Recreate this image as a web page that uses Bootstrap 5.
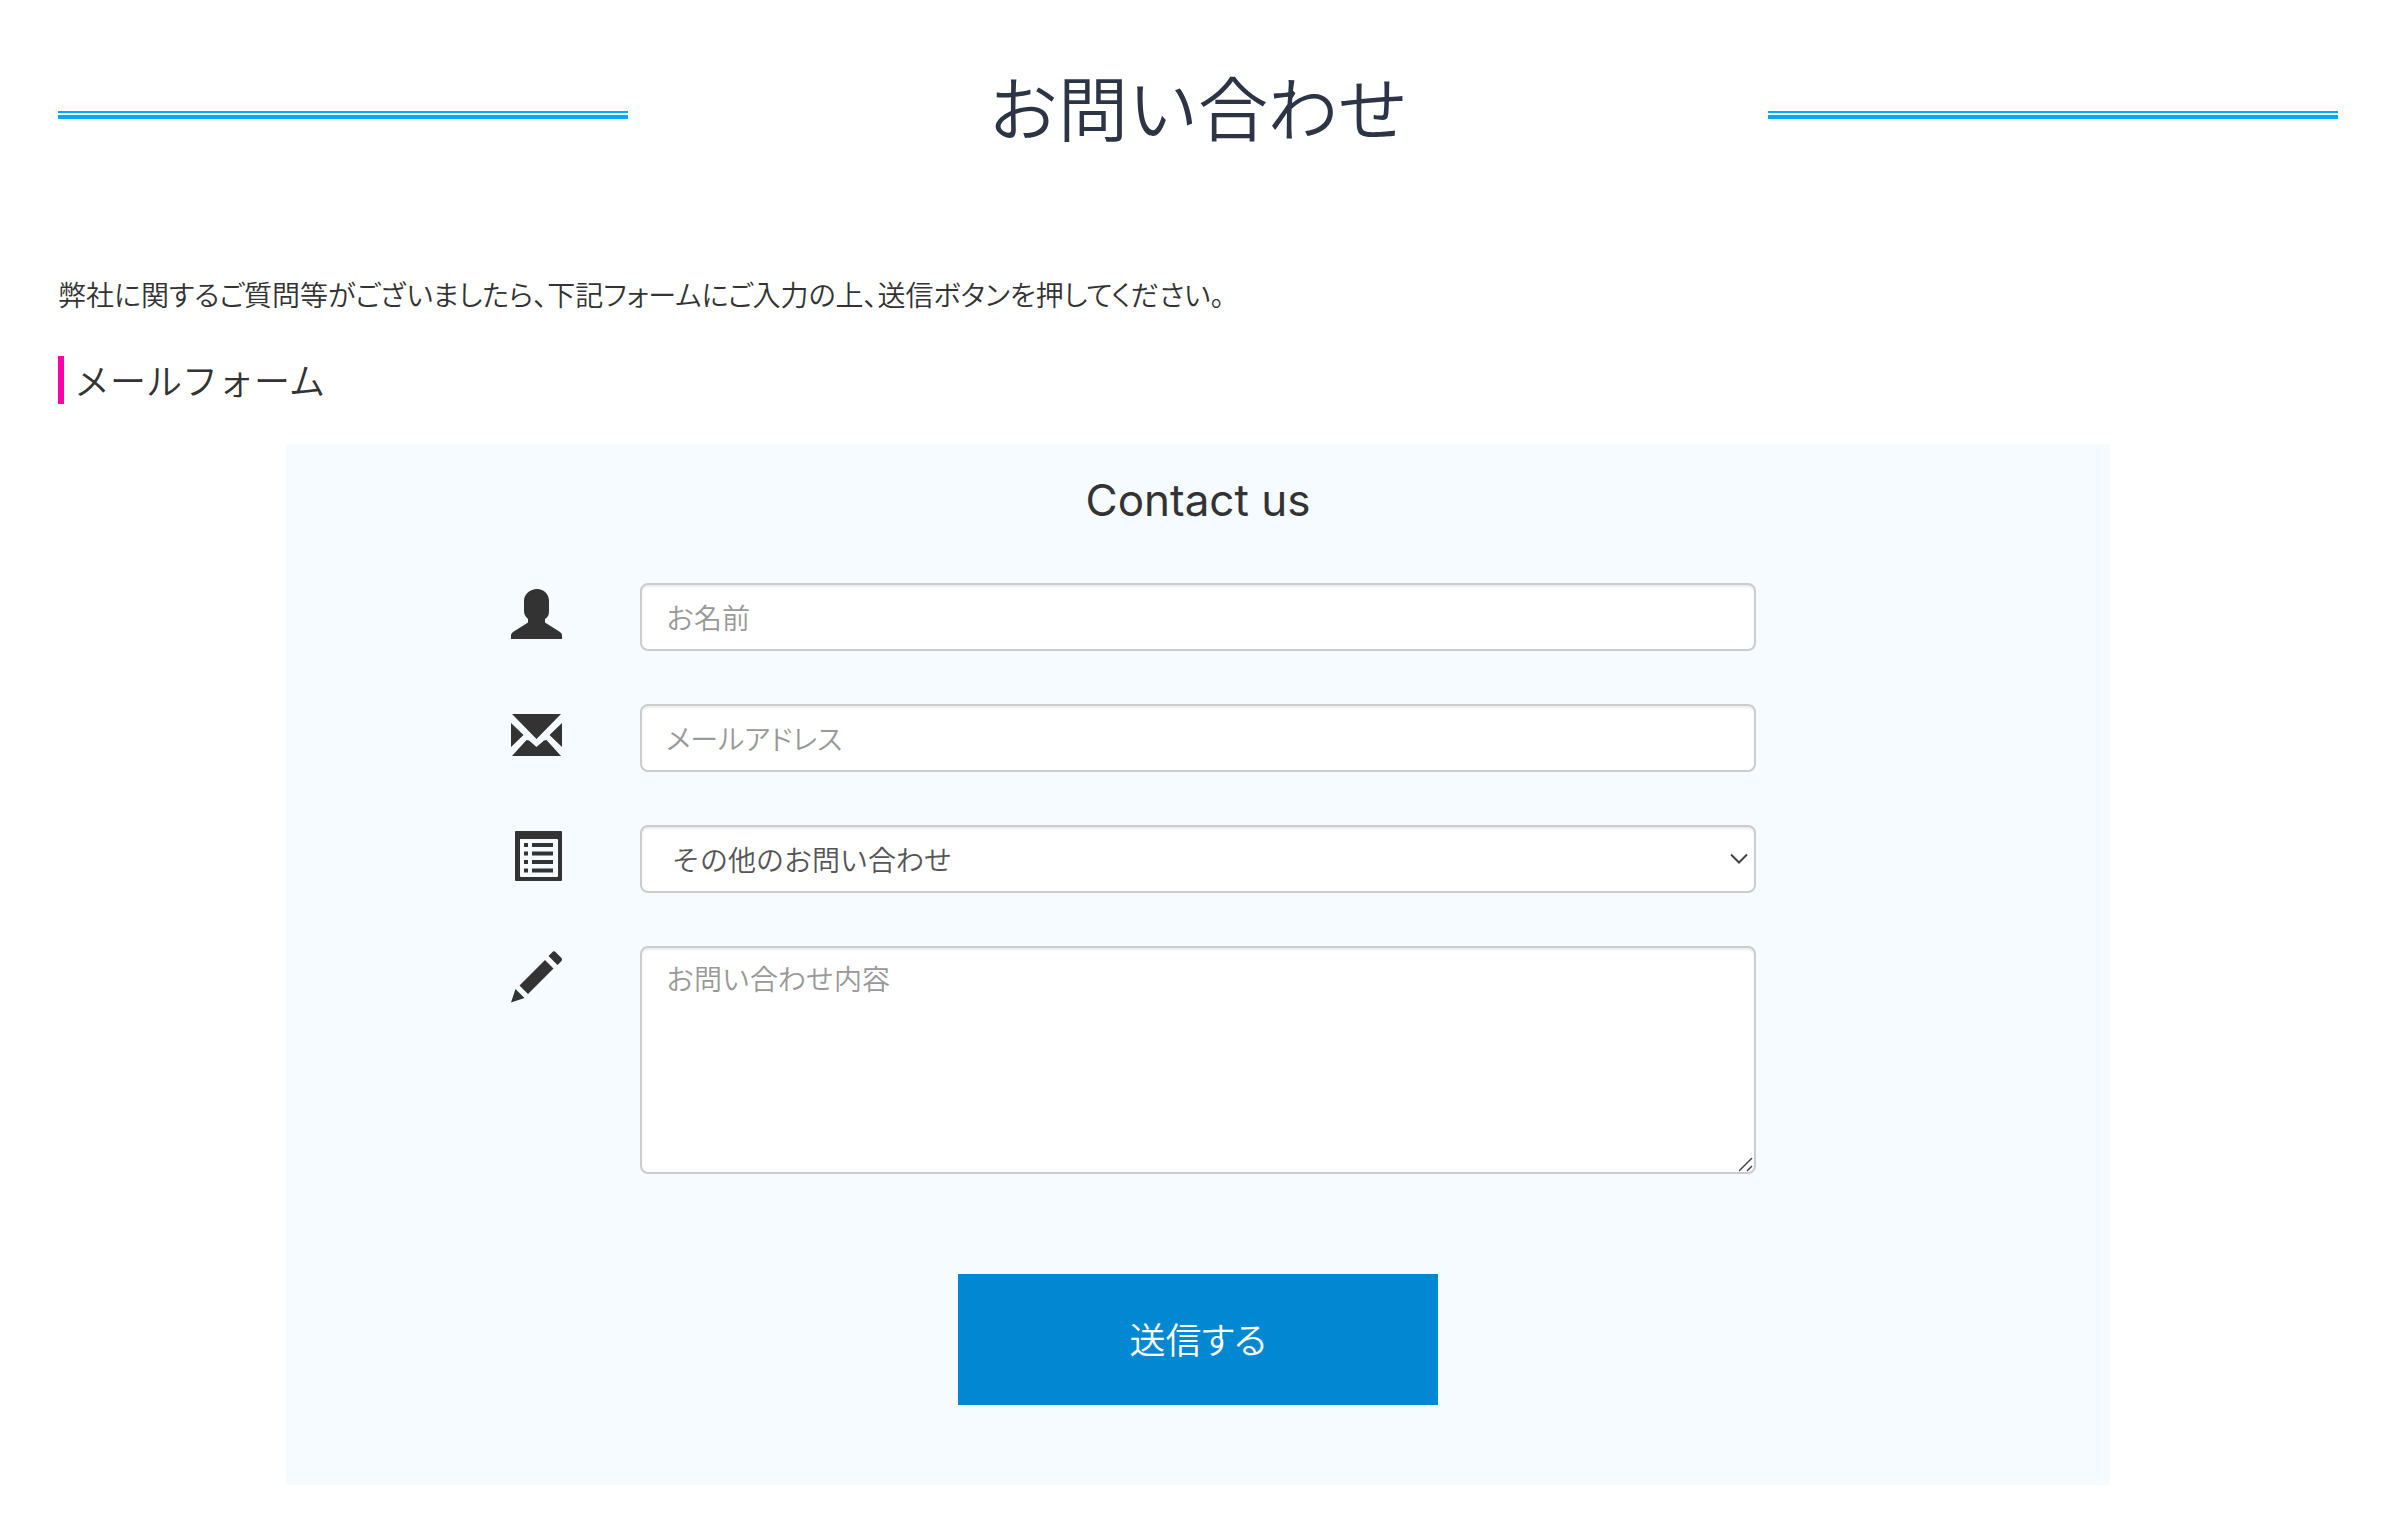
<!DOCTYPE html>
<html lang="ja">
<head>
<meta charset="utf-8">
<meta name="viewport" content="width=device-width, initial-scale=1">
<title>お問い合わせ</title>
<link href="https://cdn.jsdelivr.net/npm/bootstrap@5.3.0/dist/css/bootstrap.min.css" rel="stylesheet">
<style>
  body { font-family: "Noto Sans CJK JP", sans-serif; font-weight: 350; font-size: 28px; line-height: 40px; color: #333; background: #fff; }
  .page { padding: 56px 56px 28px 58px; }
  .rule { height: 8px; margin-top: 18px; border-top: 2px solid #03a9ff; border-bottom: 4px solid #03a9ff; }
  .page-title { font-size: 70px; line-height: 100px; font-weight: 350; color: #2d3446; }
  .intro { margin-top: 118px; font-feature-settings: "palt"; }
  .section-title { margin-top: 42px; border-left: 6px solid #f0a; padding: 0 0 2px 10px; font-size: 36px; line-height: 46px; font-weight: 350; }
  .contact-panel { width: 80%; margin-top: 40px; padding: 28px 60px 80px; background: #f6fbff; }
  .contact-title { font-family: Inter, sans-serif; font-size: 44px; line-height: 56px; font-weight: 400; margin-bottom: 55px; }
  .form-line { --bs-gutter-x: 60px; margin-bottom: 53px; }
  .icon-label { padding: 5px 17px 0 0; }
  .icon-label svg { width: 52px; height: 52px; display: block; fill: #333; }
  .field { height: 68px; padding: 10px 24px; border: 2px solid #ccc; border-radius: 8px; font-size: 28px; line-height: 40px; font-weight: 350; color: #555; background-color: #fff; box-shadow: inset 0 2px 2px rgba(0,0,0,.075); }
  .field::placeholder { color: #999; }
  .field-mail { font-feature-settings: "palt"; }
  .field-select { padding-left: 30px; background-image: url("data:image/svg+xml,%3Csvg xmlns='http://www.w3.org/2000/svg' viewBox='0 0 18 12'%3E%3Cpath d='M1 1.500L9 9.500L17 1.500' fill='none' stroke='%23444' stroke-width='2'/%3E%3C/svg%3E"); background-size: 18px 12px; background-position: right 6px center; }
  .field-area { height: 228px; }
  .field-area::-webkit-resizer { background: url("data:image/svg+xml,%3Csvg xmlns='http://www.w3.org/2000/svg' viewBox='0 0 15 15'%3E%3Cpath d='M0 14L13 1M8 14L13 9' stroke='%23444' stroke-width='1.500'/%3E%3C/svg%3E") no-repeat center / 15px 15px; }
  .send-btn { width: 480px; height: 131px; margin-top: 47px; padding: 4px 0 8px; background: #0288d3; color: #fff; border: 0; border-radius: 0; font-size: 36px; line-height: 48px; font-weight: 350; font-feature-settings: "palt"; }
</style>
<script src="https://cdn.jsdelivr.net/npm/bootstrap@5.3.0/dist/js/bootstrap.bundle.min.js"></script>
</head>
<body>
<main class="page">
  <header class="row gx-0 align-items-center">
    <div class="col-3"><div class="rule"></div></div>
    <h1 class="page-title col-6 text-center mb-0">お問い合わせ</h1>
    <div class="col-3"><div class="rule"></div></div>
  </header>
  <p class="intro mb-0">弊社に関するご質問等がございましたら、下記フォームにご入力の上、送信ボタンを押してください。</p>
  <h2 class="section-title mb-0">メールフォーム</h2>
  <section class="contact-panel mx-auto">
    <h3 class="contact-title text-center mt-0">Contact us</h3>
    <form>
      <div class="row form-line">
        <div class="col-2 d-flex justify-content-end">
          <label class="icon-label" for="name"><svg viewBox="0 0 52 52" aria-hidden="true"><path d="M26 1C19 1 13 6 13 13V23C13 27 15 29 17 31V34.500L2 44Q0 45.500 0 47V51H51V47Q51 45.500 49 44L34 34.500V31C37 29 38 27 38 23V13C38 6 33 1 26 1Z"/></svg></label>
        </div>
        <div class="col-8"><input class="form-control field" id="name" type="text" placeholder="お名前" aria-label="お名前"></div>
      </div>
      <div class="row form-line">
        <div class="col-2 d-flex justify-content-end">
          <label class="icon-label" for="mail"><svg viewBox="0 0 52 52" aria-hidden="true"><path d="M1 5H50L25.500 30ZM0 14L12.500 26L0 38ZM51 14V38L38.500 26ZM1 47L15.500 31L18 31.500L25.500 38L33 31.500L35.500 31L50 47Z"/></svg></label>
        </div>
        <div class="col-8"><input class="form-control field field-mail" id="mail" type="email" placeholder="メールアドレス" aria-label="メールアドレス"></div>
      </div>
      <div class="row form-line">
        <div class="col-2 d-flex justify-content-end">
          <label class="icon-label" for="kind"><svg viewBox="0 0 52 52" aria-hidden="true"><path fill-rule="evenodd" d="M5 1H50Q51 1 51 2V50Q51 51 50 51H5Q4 51 4 50V2Q4 1 5 1ZM9 9V46Q9 47 10 47H46Q47 47 47 46V10Q47 9 46 9Z"/><path d="M13 13h4v4h-4zM13 21.500h4v4h-4zM13 30h4v4h-4zM13 38.500h4v4h-4zM21 13h21v4H21zM21 21.500h21v4H21zM21 30h21v4H21zM21 38.500h21v4H21z"/></svg></label>
        </div>
        <div class="col-8"><select class="form-select field field-select" id="kind" aria-label="お問い合わせの種類"><option>その他のお問い合わせ</option></select></div>
      </div>
      <div class="row form-line">
        <div class="col-2 d-flex justify-content-end">
          <label class="icon-label" for="message"><svg viewBox="0 0 52 52" aria-hidden="true"><path d="M41 1.500Q43 -1 45 1.500L50 6.500Q52 8.500 50 10.500L46.500 14L37.500 5ZM34 9L42.500 17.500L17 43L8.500 34.500ZM4.500 38L13.500 47L0 51.500Z"/></svg></label>
        </div>
        <div class="col-8"><textarea class="form-control field field-area" id="message" placeholder="お問い合わせ内容" aria-label="お問い合わせ内容"></textarea></div>
      </div>
      <div class="text-center"><button class="btn send-btn" type="submit">送信する</button></div>
    </form>
  </section>
</main>
</body>
</html>
